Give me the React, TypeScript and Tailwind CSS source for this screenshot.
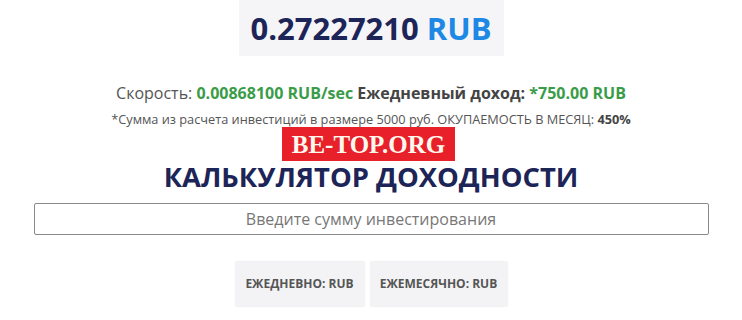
export default function App() {
  return (
    <div className="relative w-[742px] h-[320px] bg-white overflow-hidden font-['Open_Sans',sans-serif]">
      <div className="flex flex-col items-center">
        <div className="bg-[#f5f5f7] w-[265px] h-[56px] flex items-center justify-center">
          <span className="text-[31px] font-bold text-[#1d2457] leading-none">
            0.27227210 <span className="text-[#1e88e5]">RUB</span>
          </span>
        </div>
        <p className="mt-[26px] text-[16px] text-[#555] leading-[22px]">
          Скорость: <b className="text-[#3a9c48]">0.00868100 RUB/sec</b>{' '}
          <b className="text-[#444]">Ежедневный доход:</b>{' '}
          <b className="text-[#3a9c48]">*750.00 RUB</b>
        </p>
        <p className="mt-[7px] text-[12.75px] text-[#555] leading-[17px]">
          *Сумма из расчета инвестиций в размере 5000 руб. ОКУПАЕМОСТЬ В МЕСЯЦ: <b className="text-[#444]">450%</b>
        </p>
        <h2 className="mt-[32px] text-[27.4px] font-bold text-[#1d2457] leading-[34px]">
          КАЛЬКУЛЯТОР ДОХОДНОСТИ
        </h2>
        <div className="mt-[9px] w-[675px]">
          <input
            className="w-full h-[32px] border border-[#8a8a8a] rounded-[2px] text-center text-[16px] text-[#555] placeholder:text-[#777] outline-none"
            placeholder="Введите сумму инвестирования"
          />
        </div>
        <div className="mt-[26px] flex gap-[5px]">
          <button className="h-[46px] w-[130px] bg-[#f3f3f5] rounded-[3px] shadow-[0_0_2px_rgba(0,0,0,0.06)] text-[12px] font-bold text-[#555]">
            ЕЖЕДНЕВНО: RUB
          </button>
          <button className="h-[46px] w-[138px] bg-[#f3f3f5] rounded-[3px] shadow-[0_0_2px_rgba(0,0,0,0.06)] text-[12px] font-bold text-[#555]">
            ЕЖЕМЕСЯЧНО: RUB
          </button>
        </div>
      </div>
      <div className="absolute left-[282px] top-[127px] w-[173px] h-[34px] bg-[#e8202a] flex items-center justify-center">
        <span className="font-['Liberation_Serif',serif] font-bold text-[25px] text-[#fff8ee] leading-none">BE-TOP.ORG</span>
      </div>
    </div>
  );
}
